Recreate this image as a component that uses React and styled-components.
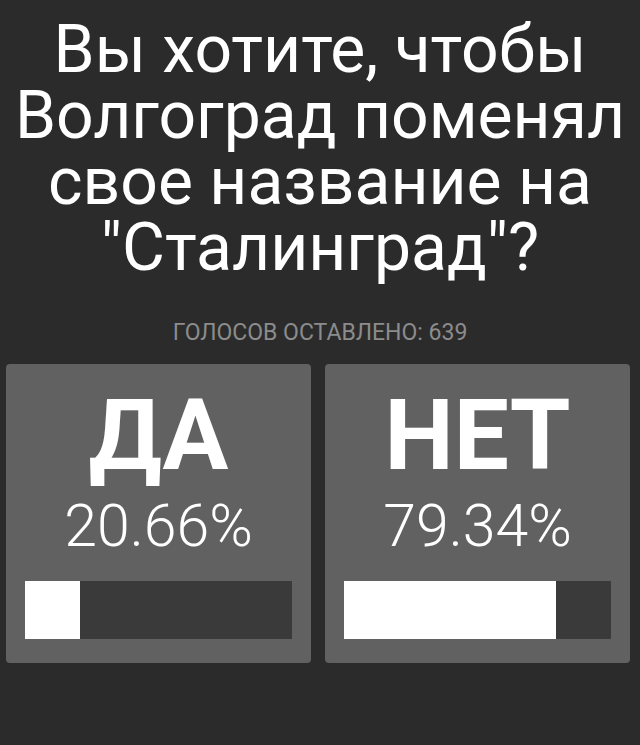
import React from 'react';
import styled, { createGlobalStyle } from 'styled-components';

const GlobalStyle = createGlobalStyle`
  html, body {
    margin: 0;
    padding: 0;
    background: #2b2b2b;
  }

  body {
    font-family: Roboto, "Liberation Sans", sans-serif;
    color: #fff;
  }
`;

const Page = styled.main`
  min-height: 745px;
  padding-top: 17px;
  box-sizing: border-box;
`;

const Question = styled.h1`
  margin: 0 auto;
  width: 630px;
  font-size: 66px;
  font-weight: 400;
  line-height: 66px;
  text-align: center;
`;

const VoteCount = styled.p`
  margin: 40px 0 0;
  font-size: 23px;
  line-height: 23px;
  text-align: center;
  text-transform: uppercase;
  color: #8c8c8c;
`;

const Options = styled.div`
  display: grid;
  grid-template-columns: 305px 305px;
  gap: 14px;
  padding: 0 6px;
  margin-top: 20px;
`;

const OptionCard = styled.section`
  display: flex;
  flex-direction: column;
  align-items: center;
  padding: 23px 19px 24px;
  background: #616161;
  border-radius: 4px;
`;

const Answer = styled.div`
  font-size: 98px;
  font-weight: 700;
  line-height: 98px;
`;

const Share = styled.div`
  margin-top: 11px;
  font-size: 59px;
  font-weight: 300;
  line-height: 59px;
`;

const Track = styled.div`
  align-self: stretch;
  height: 58px;
  margin-top: 26px;
  background: #3a3a3a;
`;

const Fill = styled.div`
  height: 100%;
  background: #fff;
`;

const results = [
  { label: 'ДА', share: 20.66 },
  { label: 'НЕТ', share: 79.34 },
];

export default function App() {
  return (
    <Page>
      <GlobalStyle />
      <Question>Вы хотите, чтобы Волгоград поменял свое название на "Сталинград"?</Question>
      <VoteCount>Голосов оставлено: 639</VoteCount>
      <Options>
        {results.map(({ label, share }) => (
          <OptionCard key={label}>
            <Answer>{label}</Answer>
            <Share>{share.toFixed(2)}%</Share>
            <Track>
              <Fill style={{ width: `${share}%` }} />
            </Track>
          </OptionCard>
        ))}
      </Options>
    </Page>
  );
}
